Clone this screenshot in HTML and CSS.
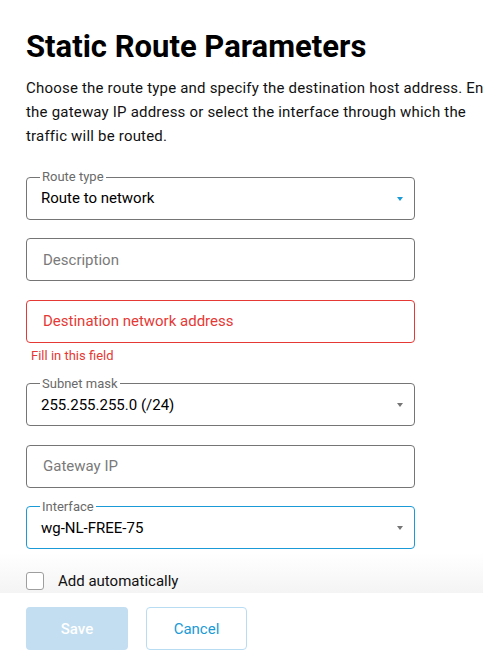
FILE: index.html
```html
<!DOCTYPE html>
<html>
<head>
<meta charset="utf-8">
<link rel="stylesheet" href="styles.css">
</head>
<body>
<div class="page">
  <div class="scroll">
    <h1 class="title">Static Route Parameters</h1>
    <p class="intro">Choose the route type and specify the destination host address. Enter the gateway IP address or select the interface through which the traffic will be routed.</p>
    <div class="fields">
      <div class="field">
        <div class="box select">
          <span class="label">Route type</span>
          <span class="value">Route to network</span>
          <span class="arrow blue"></span>
        </div>
      </div>
      <div class="field">
        <div class="box"><span class="placeholder">Description</span></div>
      </div>
      <div class="field">
        <div class="box error"><span class="placeholder">Destination network address</span></div>
        <div class="helper">Fill in this field</div>
      </div>
      <div class="field">
        <div class="box select">
          <span class="label">Subnet mask</span>
          <span class="value">255.255.255.0 (/24)</span>
          <span class="arrow"></span>
        </div>
      </div>
      <div class="field">
        <div class="box"><span class="placeholder">Gateway IP</span></div>
      </div>
      <div class="field">
        <div class="box select focused">
          <span class="label">Interface</span>
          <span class="value">wg-NL-FREE-75</span>
          <span class="arrow"></span>
        </div>
      </div>
      <label class="check">
        <span class="checkbox"></span>
        <span class="check-text">Add automatically</span>
      </label>
    </div>
  </div>
  <div class="footer">
    <button class="btn save">Save</button>
    <button class="btn cancel">Cancel</button>
  </div>
</div>
</body>
</html>
```
FILE: styles.css
```css
* { box-sizing: border-box; }
html, body {
  margin: 0;
  padding: 0;
  background: #fff;
  font-family: Roboto, "Liberation Sans", sans-serif;
  color: #000;
  overflow: hidden;
}
.page {
  width: 483px;
  height: 653px;
  display: flex;
  flex-direction: column;
  overflow: hidden;
}
.scroll {
  flex: 1;
  overflow: hidden;
  padding: 0 0 0 26px;
  background: linear-gradient(to bottom, #fff calc(100% - 40px), #f4f4f4 100%);
}
.title {
  margin: 27px 0 0;
  font-size: 31px;
  font-weight: 700;
  line-height: 40px;
  white-space: nowrap;
}
.intro {
  width: 482px;
  margin: 9px 0 0;
  font-size: 15px;
  line-height: 24px;
  letter-spacing: 0.2px;
  color: #111;
}
.fields {
  width: 389px;
  margin-top: 28.5px;
  display: flex;
  flex-direction: column;
  gap: 18.5px;
}
.field { display: flex; flex-direction: column; }
.box {
  position: relative;
  height: 43px;
  border: 1px solid #757575;
  border-radius: 4px;
  display: flex;
  align-items: center;
  padding: 0 14px;
  font-size: 15px;
}
.box.error { border-color: #e53935; }
.box.error .placeholder { color: #e53935; }
.box.focused { border-color: #1a9ad6; }
.placeholder { color: #7a7a7a; padding-left: 2px; }
.value { color: #000; }
.label {
  position: absolute;
  top: -8.5px;
  left: 13px;
  padding: 0 2px;
  background: #fff;
  font-size: 13px;
  line-height: 15px;
  color: #6a6a6a;
}
.arrow {
  position: absolute;
  right: 11px;
  top: 19px;
  width: 0;
  height: 0;
  border-left: 3.5px solid transparent;
  border-right: 3.5px solid transparent;
  border-top: 4px solid #757575;
}
.arrow.blue { border-top-color: #1a9ad6; }
.helper {
  margin-top: 6px;
  padding-left: 5px;
  font-size: 13px;
  line-height: 14px;
  color: #e53935;
  margin-bottom: 2px;
}
.check {
  display: flex;
  align-items: center;
  gap: 14px;
  margin-top: 4px;
}
.checkbox {
  width: 18px;
  height: 18px;
  border: 1px solid #9e9e9e;
  border-radius: 3px;
  background: #fff;
}
.check-text { font-size: 15px; color: #111; }
.footer {
  height: 60px;
  flex: none;
  display: flex;
  gap: 18px;
  padding: 14px 0 0 26px;
  background: #fff;
}
.btn {
  height: 43px;
  border-radius: 4px;
  font-family: Roboto, "Liberation Sans", sans-serif;
  font-size: 15px;
  padding: 0;
}
.save {
  width: 102px;
  background: #c2def0;
  border: none;
  color: #fff;
  font-weight: 500;
}
.cancel {
  width: 101px;
  background: #fff;
  border: 1px solid #b8dcf2;
  color: #1a9ad6;
}
```
